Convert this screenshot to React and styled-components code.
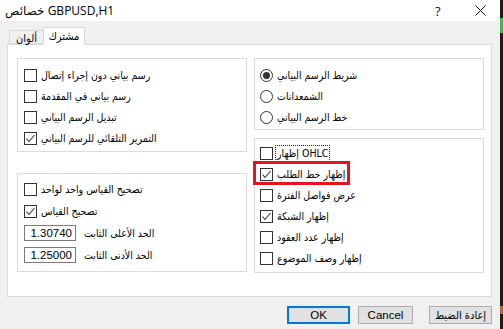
import React from "react";
import styled, { createGlobalStyle } from "styled-components";

const Global = createGlobalStyle`
  html, body { margin: 0; padding: 0; background: #f0f0f0; overflow: hidden; }
  body { font-family: "Liberation Sans", "DejaVu Sans", sans-serif; font-size: 11px; color: #000; }
`;

const Screen = styled.div`
  display: flex;
  width: 503px;
  height: 329px;
`;

const Dialog = styled.div`
  width: 500px;
  height: 329px;
  display: flex;
  flex-direction: column;
  background: #f0f0f0;
`;

const EdgeStrip = styled.div`
  width: 3px;
  height: 329px;
  background: linear-gradient(
    to bottom,
    #1b1b1b 0px, #1b1b1b 18px,
    #2fc43a 18px, #2fc43a 33px,
    #1b1b1b 33px, #1b1b1b 306px,
    #b0701e 306px, #b0701e 314px,
    #1b1b1b 314px
  );
`;

const TitleBar = styled.div`
  height: 21px;
  background: #fff;
  display: flex;
  align-items: center;
  padding-left: 5px;
`;

const TitleText = styled.span`
  font-family: "Open Sans", "DejaVu Sans", sans-serif;
  font-size: 12px;
  flex: 1;
`;

const HelpMark = styled.span`
  font-family: "Open Sans", sans-serif;
  font-size: 13px;
  width: 10px;
  margin-right: 30px;
  color: #111;
`;

const CloseBox = styled.div`
  width: 12px;
  margin-right: 13px;
  display: flex;
  align-items: center;
`;

const TabStrip = styled.div`
  display: flex;
  align-items: flex-end;
  height: 23px;
  padding-left: 9px;
`;

const Tab = styled.div`
  position: relative;
  z-index: ${(p) => (p.$active ? 2 : 1)};
  box-sizing: border-box;
  height: ${(p) => (p.$active ? "18px" : "14px")};
  width: ${(p) => p.$w}px;
  margin-bottom: ${(p) => (p.$active ? "-1px" : "0")};
  padding-top: ${(p) => (p.$active ? "0" : "2px")};
  background: ${(p) => (p.$active ? "#fff" : "#f0f0f0")};
  border: 1px solid #d9d9d9;
  border-bottom: ${(p) => (p.$active ? "none" : "1px solid #d9d9d9")};
  margin-left: ${(p) => (p.$active ? "-1px" : "0")};
  display: flex;
  align-items: center;
  justify-content: center;
  font-family: "DejaVu Sans Condensed", "DejaVu Sans", sans-serif;
  font-size: 11px;
  white-space: nowrap;
`;

const Panel = styled.div`
  margin-left: 7px;
  width: 485px;
  height: 253px;
  box-sizing: border-box;
  background: #fff;
  border: 1px solid #d9d9d9;
  padding: 13px 0 0 9px;
  display: grid;
  grid-template-columns: 230px 230px;
  column-gap: 7px;
  align-items: start;
`;

const Column = styled.div`
  display: flex;
  flex-direction: column;
  gap: ${(p) => p.$gap}px;
`;

const Group = styled.div`
  box-sizing: border-box;
  height: ${(p) => p.$h}px;
  border: 1px solid #dcdcdc;
  padding: ${(p) => p.$pt}px 0 0 ${(p) => p.$pl}px;
  display: flex;
  flex-direction: column;
`;

const Row = styled.div`
  position: relative;
  height: ${(p) => p.$h || 21}px;
  display: flex;
  align-items: center;
  gap: 2px;
  white-space: nowrap;
  ${(p) =>
    p.$highlight &&
    `
    &::after {
      content: "";
      position: absolute;
      left: -7px;
      top: -3px;
      width: 97px;
      height: 24px;
      box-sizing: border-box;
      border: 3px solid #e4141d;
      pointer-events: none;
    }
  `}
`;

const Label = styled.span`
  font-family: "DejaVu Sans Condensed", "DejaVu Sans", sans-serif;
  font-size: 10.5px;
  padding: 1px 1px;
  border: 1px ${(p) => (p.$focus ? "dotted #222" : "solid transparent")};
  line-height: 13px;
`;

const Box = styled.span`
  box-sizing: border-box;
  width: 13px;
  height: 13px;
  border: 1px solid #333;
  background: #fff;
  flex: none;
  display: flex;
  align-items: center;
  justify-content: center;
`;

const Radio = styled.span`
  box-sizing: border-box;
  width: 13px;
  height: 13px;
  border: 1px solid #333;
  border-radius: 50%;
  background: #fff;
  flex: none;
  display: flex;
  align-items: center;
  justify-content: center;
  &::after {
    content: "";
    width: 7px;
    height: 7px;
    border-radius: 50%;
    background: ${(p) => (p.$on ? "#333" : "transparent")};
  }
`;

const NumberInput = styled.span`
  box-sizing: border-box;
  width: 52px;
  height: 16px;
  border: 1px solid #7a7a7a;
  background: #fff;
  display: flex;
  align-items: center;
  justify-content: flex-end;
  padding-right: 3px;
  font-family: "Liberation Sans", sans-serif;
  font-size: 11.5px;
  margin-right: 4px;
  flex: none;
`;

const ButtonRow = styled.div`
  display: flex;
  justify-content: flex-end;
  align-items: center;
  margin-top: 9px;
  padding-right: 8px;
`;

const Button = styled.div`
  box-sizing: border-box;
  width: ${(p) => p.$w}px;
  height: 18px;
  margin-left: ${(p) => p.$ml || 0}px;
  background: #e1e1e1;
  border: ${(p) => (p.$default ? "2px solid #0078d7" : "1px solid #adadad")};
  display: flex;
  align-items: center;
  justify-content: center;
  font-family: "Liberation Sans", "DejaVu Sans", sans-serif;
  font-size: 11.5px;
`;

const ArabicBtnText = styled.span`
  font-family: "DejaVu Sans Condensed", "DejaVu Sans", sans-serif;
  font-size: 11px;
`;

const Check = () => (
  <svg width="11" height="11" viewBox="0 0 11 11">
    <polyline points="1.5,5.5 4,8.5 9.5,2" fill="none" stroke="#333" strokeWidth="1.1" />
  </svg>
);

const CheckRow = ({ checked, text, focus, highlight, h }) => (
  <Row $highlight={highlight} $h={h}>
    <Box>{checked && <Check />}</Box>
    <Label $focus={focus}>{text}</Label>
  </Row>
);

const RadioRow = ({ on, text }) => (
  <Row>
    <Radio $on={on} />
    <Label>{text}</Label>
  </Row>
);

const InputRow = ({ value, text }) => (
  <Row $h={22}>
    <NumberInput>{value}</NumberInput>
    <Label>{text}</Label>
  </Row>
);

export default function App() {
  return (
    <Screen>
      <Global />
      <Dialog>
        <TitleBar>
          <TitleText>خصائص GBPUSD,H1</TitleText>
          <HelpMark>?</HelpMark>
          <CloseBox>
            <svg width="11" height="11" viewBox="0 0 11 11">
              <path d="M0.5 0.5 L10.5 10.5 M10.5 0.5 L0.5 10.5" stroke="#111" strokeWidth="1" />
            </svg>
          </CloseBox>
        </TitleBar>
        <TabStrip>
          <Tab $w={35}>ألوان</Tab>
          <Tab $w={42} $active>مشترك</Tab>
        </TabStrip>
        <Panel>
          <Column $gap={21}>
            <Group $h={94} $pt={6} $pl={6}>
              <CheckRow text="رسم بياني دون إجراء إتصال" />
              <CheckRow text="رسم بياني في المقدمة" />
              <CheckRow text="تبديل الرسم البياني" />
              <CheckRow checked text="التمرير التلقائي للرسم البياني" />
            </Group>
            <Group $h={99} $pt={4} $pl={6}>
              <CheckRow h={22} text="تصحيح القياس واحد لواحد" />
              <CheckRow h={22} checked text="تصحيح القياس" />
              <InputRow value="1.30740" text="الحد الأعلى الثابت" />
              <InputRow value="1.25000" text="الحد الأدنى الثابت" />
            </Group>
          </Column>
          <Column $gap={8}>
            <Group $h={72} $pt={6} $pl={5}>
              <RadioRow on text="شريط الرسم البياني" />
              <RadioRow text="الشمعدانات" />
              <RadioRow text="خط الرسم البياني" />
            </Group>
            <Group $h={135} $pt={4} $pl={5}>
              <CheckRow focus text="إظهار OHLC" />
              <CheckRow highlight checked text="إظهار خط الطلب" />
              <CheckRow text="عرض فواصل الفترة" />
              <CheckRow checked text="إظهار الشبكة" />
              <CheckRow text="إظهار عدد العقود" />
              <CheckRow text="إظهار وصف الموضوع" />
            </Group>
          </Column>
        </Panel>
        <ButtonRow>
          <Button $w={63} $default>OK</Button>
          <Button $w={55} $ml={8}>Cancel</Button>
          <Button $w={63} $ml={16}>
            <ArabicBtnText>إعادة الضبط</ArabicBtnText>
          </Button>
        </ButtonRow>
      </Dialog>
      <EdgeStrip />
    </Screen>
  );
}
